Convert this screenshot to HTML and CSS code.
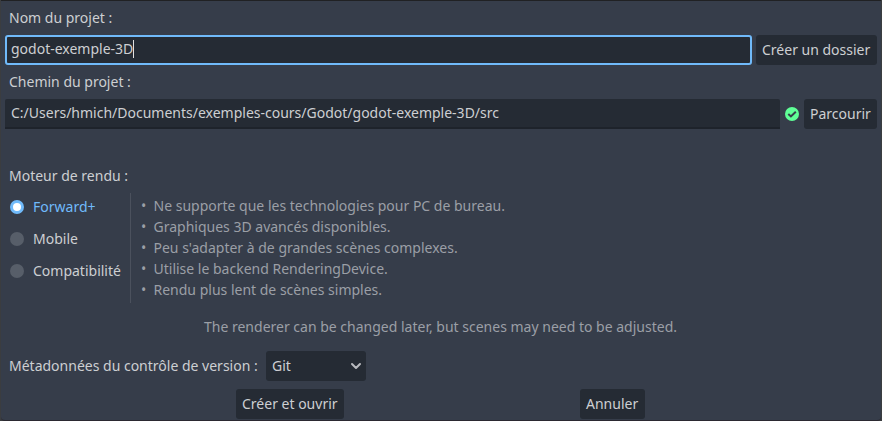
FILE: index.html
```html
<!DOCTYPE html>
<html lang="fr">
<head>
<meta charset="utf-8">
<title>Nouveau projet</title>
<link rel="stylesheet" href="styles.css">
</head>
<body>
<main class="dialog">
  <div class="label label-name"><span>Nom du projet :</span></div>
  <div class="row">
    <div class="field field-focus"><span>godot-exemple-3D</span><i class="caret"></i></div>
    <div class="button btn-folder"><span>Créer un dossier</span></div>
  </div>
  <div class="label label-path"><span>Chemin du projet :</span></div>
  <div class="row">
    <div class="field"><span>C:/Users/hmich/Documents/exemples-cours/Godot/godot-exemple-3D/src</span></div>
    <svg class="status" viewBox="0 0 16 16"><circle cx="8" cy="8" r="7" fill="#5fff97"/><path d="M4.3 8 6.9 10.4 11.8 5.7" fill="none" stroke="#363d4a" stroke-width="2"/></svg>
    <div class="button btn-browse"><span>Parcourir</span></div>
  </div>
  <div class="label label-renderer"><span>Moteur de rendu :</span></div>
  <div class="renderer">
    <div class="options">
      <div class="option selected"><i class="radio"></i><span>Forward+</span></div>
      <div class="option"><i class="radio"></i><span>Mobile</span></div>
      <div class="option"><i class="radio"></i><span>Compatibilité</span></div>
    </div>
    <ul class="details">
      <li><span>Ne supporte que les technologies pour PC de bureau.</span></li>
      <li><span>Graphiques 3D avancés disponibles.</span></li>
      <li><span>Peu s'adapter à de grandes scènes complexes.</span></li>
      <li><span>Utilise le backend RenderingDevice.</span></li>
      <li><span>Rendu plus lent de scènes simples.</span></li>
    </ul>
  </div>
  <p class="note"><span>The renderer can be changed later, but scenes may need to be adjusted.</span></p>
  <div class="vcs">
    <span class="vcs-label">Métadonnées du contrôle de version :</span>
    <div class="select"><span>Git</span><svg class="chevron" viewBox="0 0 12 12"><path d="M2 4 6 8 10 4" fill="none" stroke="#b9bbbf" stroke-width="2" stroke-linecap="round" stroke-linejoin="round"/></svg></div>
  </div>
  <div class="actions">
    <div class="button btn-create"><span>Créer et ouvrir</span></div>
    <div class="button btn-cancel"><span>Annuler</span></div>
  </div>
</main>
</body>
</html>
```
FILE: styles.css
```css
* { box-sizing: border-box; }
body {
  margin: 0;
  background: #3b3d40;
  color: #cdcfd2;
  font: 14px/20px "Noto Sans", sans-serif;
  white-space: nowrap;
  overflow: hidden;
}
.dialog {
  height: 421px;
  margin: 0 1px;
  padding: 0 4px;
  background: #363d4a;
  border-top: 1px solid #202123;
  border-bottom: 1px solid #2b2931;
  border-radius: 0 0 4px 4px;
}
.label { padding-left: 4px; height: 20px; }
.label-name { margin: 7px 0; }
.label-path { margin: 7px 0; }
.label-renderer { margin: 37px 0 7px; }
.row { display: flex; height: 30px; gap: 4px; }
.field {
  flex: 1;
  display: flex;
  align-items: center;
  padding: 0 6px;
  background: #252b34;
  border-bottom: 2px solid #1e232b;
  border-radius: 2px 2px 0 0;
}
.field-focus {
  border: 2px solid #70bafa;
  border-radius: 3px;
  padding: 0 4px 2px;
}
.caret { width: 1px; height: 18px; background: #e0e0e0; }
.button {
  display: flex;
  align-items: center;
  height: 30px;
  padding-left: 6px;
  background: #252b34;
  border-radius: 3px;
}
.btn-folder { width: 121px; }
.btn-browse { width: 73px; }
.status { width: 16px; height: 16px; margin-top: 7px; }
.renderer { display: flex; height: 111px; }
.options { width: 125px; padding-left: 5px; }
.option { display: flex; align-items: center; gap: 9px; height: 28px; margin-bottom: 4px; }
.radio { width: 14px; height: 14px; border-radius: 50%; background: #575e69; }
.selected { color: #70bafa; }
.selected .radio { background: #fff; border: 3px solid #70bafa; }
.details {
  height: 110px;
  margin: 0;
  padding: 2px 0 0 10px;
  border-left: 1px solid #4b515d;
  list-style: none;
  line-height: 21px;
  color: #9b9fa6;
}
.details li { display: flex; }
.details li::before { content: "•"; width: 12.5px; }
.note { margin: 13px 1px 14px 0; text-align: center; color: #9b9fa6; }
.vcs { display: flex; align-items: center; height: 30px; padding-left: 4px; }
.vcs-label { width: 257px; }
.select {
  display: flex;
  align-items: center;
  justify-content: space-between;
  width: 100px;
  height: 30px;
  padding: 0 4px 0 6px;
  background: #252b34;
  border-radius: 3px;
}
.chevron { width: 12px; height: 12px; }
.actions { display: flex; margin-top: 8px; padding-left: 231px; gap: 236px; }
.btn-create { width: 108px; }
.btn-cancel { width: 65px; }
```
